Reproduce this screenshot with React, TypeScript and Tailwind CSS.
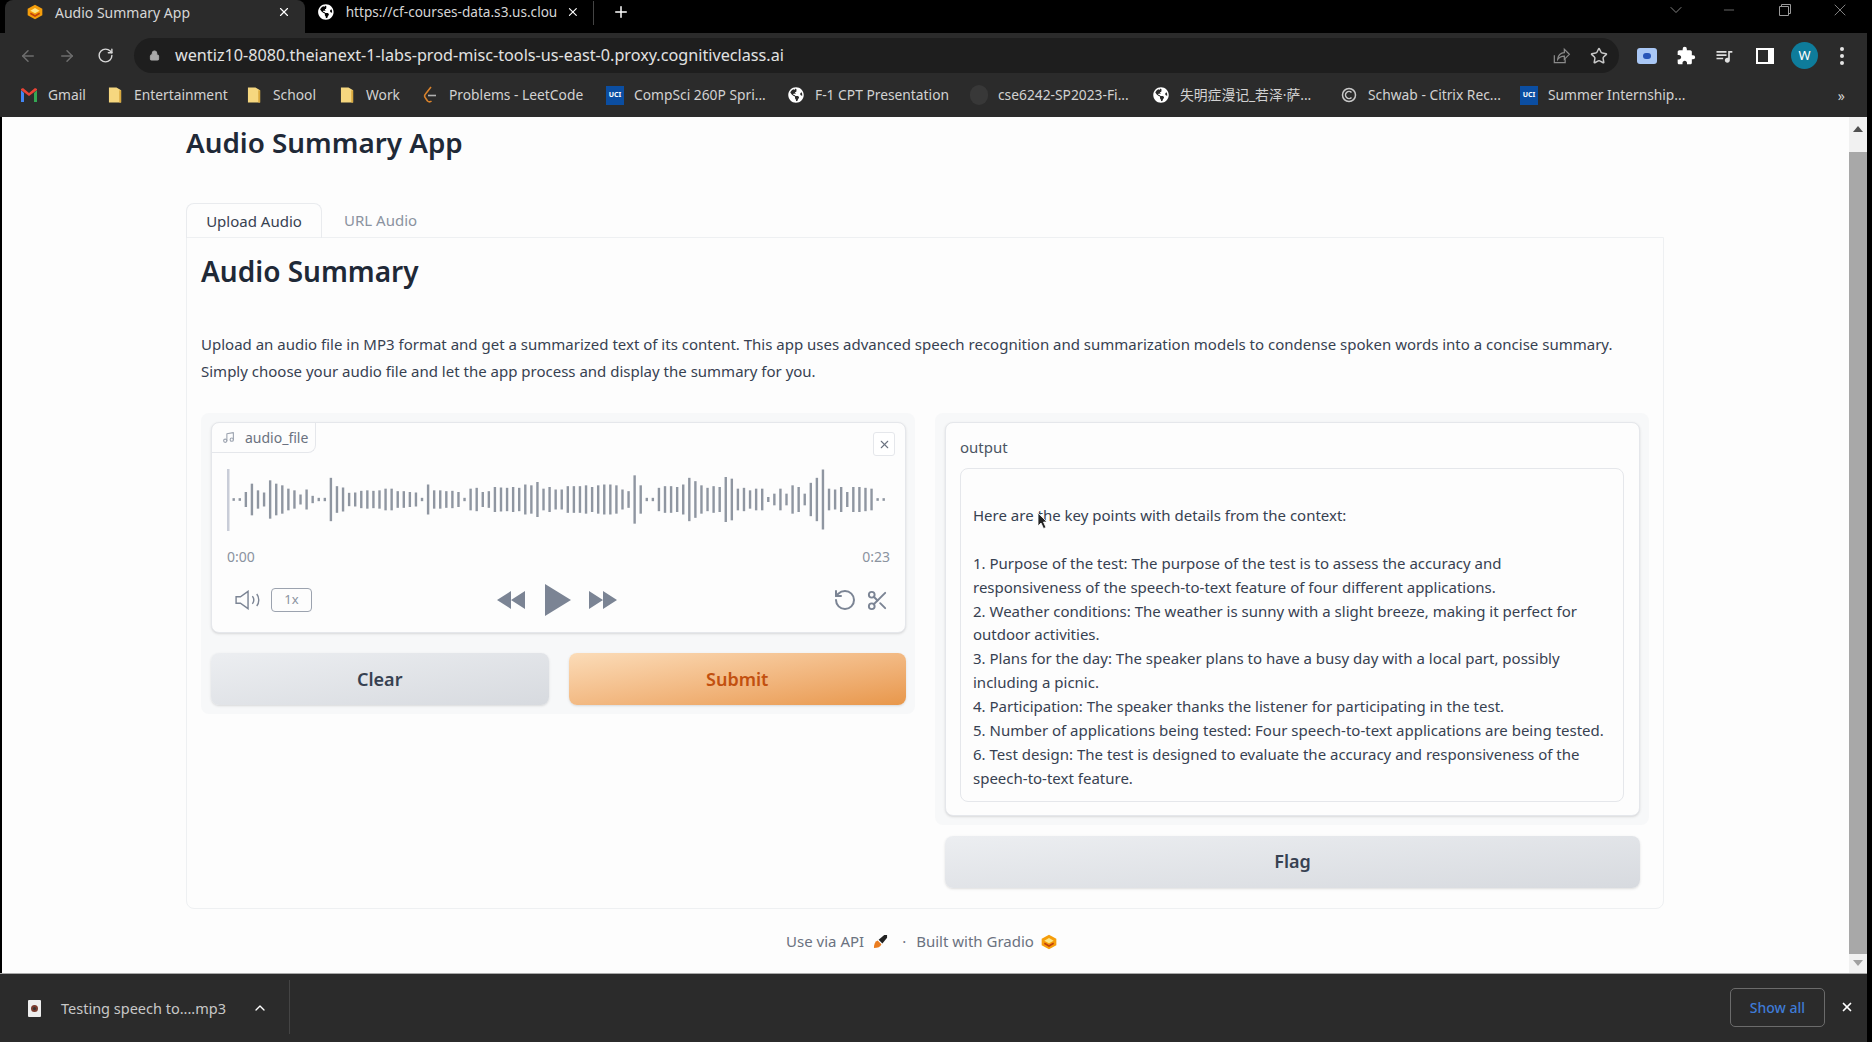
import { ArrowLeft, ArrowRight, ChevronDown, ChevronUp, Lock, Minus, Music, Plus, RotateCcw, RotateCw, Scissors, Star, X } from "lucide-react";
import { FaGlobeAmericas } from "react-icons/fa";
import { MdExtension, MdQueueMusic } from "react-icons/md";

const bars = [
  8, 8, 45, 95, 55, 42, 115, 95, 85, 65, 55, 30, 60, 22, 10, 10, 130, 80, 72, 40, 42, 52, 55, 52, 55, 65, 65, 50, 50, 45, 42, 10,
  90, 55, 55, 50, 52, 45, 10, 65, 70, 45, 50, 75, 72, 70, 75, 70, 90, 85, 105, 65, 75, 60, 60, 80, 80, 80, 85, 75, 85, 90, 90, 85,
  60, 50, 145, 85, 10, 10, 70, 80, 80, 75, 90, 130, 110, 85, 70, 80, 75, 135, 125, 65, 70, 55, 65, 65, 15, 35, 65, 35, 85, 75, 35,
  100, 130, 180, 65, 60, 75, 45, 75, 75, 70, 65, 8, 8,
];

const summary = [
  "Here are the key points with details from the context:",
  "\u00a0",
  "1. Purpose of the test: The purpose of the test is to assess the accuracy and",
  "responsiveness of the speech-to-text feature of four different applications.",
  "2. Weather conditions: The weather is sunny with a slight breeze, making it perfect for",
  "outdoor activities.",
  "3. Plans for the day: The speaker plans to have a busy day with a local part, possibly",
  "including a picnic.",
  "4. Participation: The speaker thanks the listener for participating in the test.",
  "5. Number of applications being tested: Four speech-to-text applications are being tested.",
  "6. Test design: The test is designed to evaluate the accuracy and responsiveness of the",
  "speech-to-text feature.",
];

function GradioLogo({ className }: { className: string }) {
  return (
    <svg viewBox="0 0 24 24" className={className}>
      <path d="M12 1 23 7v10l-11 6-11-6V7z" fill="#f59e0b" />
      <path d="M12 6 19 10l-7 4-7-4z" fill="#fde68a" />
      <path d="M5 14l7 4 7-4" fill="none" stroke="#c2410c" strokeWidth="2.5" />
    </svg>
  );
}

function Folder() {
  return (
    <svg viewBox="0 0 16 18" className="w-[15px] h-[18px]">
      <path d="M1 1h8l5 3v13H1z" fill="#f6d77f" />
      <path d="M14 4v13h-2V4z" fill="#d9a93f" />
    </svg>
  );
}

function Uci() {
  return (
    <span className="w-[19px] h-[19px] flex items-center justify-center bg-[#0b4ea2] text-[7px] font-bold text-white">
      UCI
    </span>
  );
}

function Globe() {
  return <FaGlobeAmericas className="w-[16px] h-[16px] text-white" />;
}

function Gmail() {
  return (
    <svg viewBox="0 0 18 16" className="w-[18px] h-[16px]">
      <path d="M1 3v12h3V6z" fill="#4285f4" />
      <path d="M14 6v9h3V3z" fill="#34a853" />
      <path d="M1 3l8 6 8-6v-1l-2-1-6 5-6-5-2 1z" fill="#ea4335" />
    </svg>
  );
}

function Leet() {
  return (
    <svg viewBox="0 0 14 18" className="w-[14px] h-[18px]" fill="none" strokeWidth="1.6">
      <path d="M8 1 2.5 8a3 3 0 0 0 0 4l2 3a3 3 0 0 0 4 0" stroke="#d9822b" />
      <path d="M5 9.500h8" stroke="#b0b0b0" />
    </svg>
  );
}

function Github() {
  return <span className="w-[20px] h-[20px] rounded-full bg-[#383838]" />;
}

function Schwab() {
  return (
    <svg viewBox="0 0 16 16" className="w-[16px] h-[16px]" fill="none" stroke="#c8c8c8" strokeWidth="1.5">
      <circle cx="8" cy="8" r="6.500" />
      <path d="M10.500 5.500a3.500 3.500 0 1 0 0 5" />
    </svg>
  );
}

const bookmarks = [
  { icon: <Gmail />, label: "Gmail", width: "w-[86px]" },
  { icon: <Folder />, label: "Entertainment", width: "w-[139px]" },
  { icon: <Folder />, label: "School", width: "w-[93px]" },
  { icon: <Folder />, label: "Work", width: "w-[83px]" },
  { icon: <Leet />, label: "Problems - LeetCode", width: "w-[185px]" },
  { icon: <Uci />, label: "CompSci 260P Spri...", width: "w-[181px]" },
  { icon: <Globe />, label: "F-1 CPT Presentation", width: "w-[183px]" },
  { icon: <Github />, label: "cse6242-SP2023-Fi...", width: "w-[182px]" },
  { icon: <Globe />, label: "失明症漫记_若泽·萨...", width: "w-[188px]" },
  { icon: <Schwab />, label: "Schwab - Citrix Rec...", width: "w-[180px]" },
  { icon: <Uci />, label: "Summer Internship...", width: "w-[190px]" },
];

function TabStrip() {
  return (
    <div className="h-[33px] shrink-0 flex items-center pl-[5px] text-[14px] text-[#d6d6d6]">
      <div className="w-[300px] h-full flex items-center pl-[22px] pr-[14px] pb-[9px] bg-[#2b2b2b] rounded-t-lg">
        <GradioLogo className="w-[16px] h-[16px]" />
        <span className="ml-[12px] flex-1">Audio Summary App</span>
        <X className="w-[14px] h-[14px] text-white" />
      </div>
      <div className="w-[288px] h-full flex items-center pl-[13px] pr-[13px] pb-[9px]">
        <Globe />
        <span className="ml-[12px] w-[212px] text-[13.600px] whitespace-nowrap">https://cf-courses-data.s3.us.clou</span>
        <X className="ml-[9px] w-[14px] h-[14px] text-white" />
      </div>
      <div className="w-px h-[24px] mb-[8px] bg-[#444]" />
      <Plus className="ml-[18px] mb-[9px] w-[18px] h-[18px] text-white" />
      <div className="ml-auto flex items-center h-full pb-[13px] text-[#9a9a9a]">
        <ChevronDown className="w-[20px] h-[20px]" strokeWidth={1} />
        <Minus className="ml-[35px] w-[16px] h-[16px]" strokeWidth={1} />
        <svg viewBox="0 0 14 14" className="ml-[41px] w-[14px] h-[14px]" fill="none" stroke="currentColor">
          <path d="M1.500 3.500h9v9h-9z M3.500 3.500v-2h9v9h-2" />
        </svg>
        <X className="ml-[38px] mr-[22px] w-[20px] h-[20px]" strokeWidth={1} />
      </div>
    </div>
  );
}

function Toolbar() {
  return (
    <div className="h-[45px] shrink-0 flex items-center text-[#c4c4c4]">
      <ArrowLeft className="ml-[19px] w-[18px] h-[18px] text-[#6e6e6e]" />
      <ArrowRight className="ml-[21px] w-[18px] h-[18px] text-[#6e6e6e]" />
      <RotateCw className="ml-[21px] w-[17px] h-[17px] text-[#d8d8d8]" />
      <div className="ml-[20px] w-[1485px] h-[35px] flex items-center pl-[15px] rounded-full bg-[#1e1e1e]">
        <Lock className="w-[11px] h-[13px] text-[#aaa] fill-[#aaa]" />
        <span className="ml-[15px] text-[16.200px] text-[#e2e2e2]">
          wentiz10-8080.theianext-1-labs-prod-misc-tools-us-east-0.proxy.cognitiveclass.ai
        </span>
        <svg viewBox="0 0 24 24" className="ml-auto w-[20px] h-[20px]" fill="none" stroke="#8a8a8a" strokeWidth="1.5">
          <path d="M4 11v9h13v-4 M8 16c0-5 4-8 8-8V4l6 6-6 6v-4c-4 0-6 1-8 4z" />
        </svg>
        <Star className="ml-[19px] mr-[11px] w-[18px] h-[18px] text-[#c8c8c8]" />
      </div>
      <div className="ml-[18px] w-[20px] h-[16px] flex items-center justify-center rounded-[3px] bg-[#a9c7f5]">
        <span className="w-[8px] h-[6px] rounded-full bg-[#2855b8]" />
      </div>
      <MdExtension className="ml-[19px] w-[20px] h-[20px] text-white" />
      <MdQueueMusic className="ml-[18px] w-[20px] h-[20px] text-[#e0e0e0]" />
      <div className="ml-[22px] w-[18px] h-[16px] flex border-2 border-white">
        <span className="w-[10px] bg-[#2b2b2b]" />
        <span className="flex-1 bg-white" />
      </div>
      <div className="ml-[17px] w-[27px] h-[27px] flex items-center justify-center rounded-full bg-[#0e7c9b] text-[13px] text-white">
        W
      </div>
      <div className="ml-[22px] flex flex-col gap-[3px]">
        <span className="w-[4px] h-[4px] rounded-full bg-[#e4e4e4]" />
        <span className="w-[4px] h-[4px] rounded-full bg-[#e4e4e4]" />
        <span className="w-[4px] h-[4px] rounded-full bg-[#e4e4e4]" />
      </div>
    </div>
  );
}

function BookmarkBar() {
  return (
    <div className="h-[39px] shrink-0 pb-[5px] pl-[20px] flex items-center text-[13.800px] text-[#d2d2d2] font-['Noto_Sans','Noto_Sans_CJK_SC',sans-serif]">
      {bookmarks.map((b) => (
        <div key={b.label} className={`${b.width} flex items-center gap-[10px] whitespace-nowrap`}>
          <span className="w-[18px] flex justify-center">{b.icon}</span>
          {b.label}
        </div>
      ))}
      <span className="ml-auto mr-[22px] text-[14px]">»</span>
    </div>
  );
}

function AudioCard() {
  return (
    <div className="relative h-[211px] rounded-lg border border-[#e5e7eb] bg-[#fdfdfd] px-[15px] shadow-sm">
      <div className="w-[104px] h-[30px] flex items-center gap-[10px] pl-[10px] -ml-[15px] rounded-br-lg border-b border-r border-[#e5e7eb] text-[14px] text-[#6b7280]">
        <Music className="w-[13px] h-[13px] text-[#9ca3af]" />
        audio_file
      </div>
      <button className="absolute top-[9px] right-[10px] w-[22px] h-[24px] flex items-center justify-center rounded-[3px] border border-[#e5e7eb] bg-white">
        <X className="w-[13px] h-[13px] text-[#6b7280]" />
      </button>
      <svg viewBox="0 0 664 62" className="mt-[16px] w-[664px] h-[62px]">
        <rect x="0" y="0" width="2.500" height="62" fill="#c9cdd8" />
        {bars.map((h, i) => (
          <rect key={i} x={5.500 + (i * 650) / (bars.length - 1)} y={30.500 - h / 6} width="2.400" height={h / 3} fill="#8f96a1" />
        ))}
      </svg>
      <div className="mt-[15px] h-[20px] flex items-center justify-between text-[14px] text-[#8b93a0]">
        <span>0:00</span>
        <span>0:23</span>
      </div>
      <div className="mt-[18px] h-[32px] grid grid-cols-3 items-center">
        <div className="flex items-center pl-[8px]">
          <svg viewBox="0 0 23 18" className="w-[25px] h-[20px]" fill="none" stroke="#7b8494" strokeWidth="1.300">
            <path d="M1 6v6h4l7 5V1L5 6z" />
            <path d="M16 5.500c1.500 2 1.500 5 0 7 M20 3.500c2.500 3 2.500 8 0 11" />
          </svg>
          <span className="ml-[11px] w-[41px] h-[24px] flex items-center justify-center rounded border border-[#9ca3af] text-[13px] text-[#8b93a0]">
            1x
          </span>
        </div>
        <div className="flex items-center justify-center pr-[3px]">
          <svg viewBox="0 0 28 20" className="w-[28px] h-[20px]" fill="#7b8494">
            <path d="M0 10 14 1v18z M14 10 28 1v18z" />
          </svg>
          <svg viewBox="0 0 26 32" className="ml-[20px] w-[26px] h-[32px]" fill="#7b8494">
            <path d="M0 0 26 16 0 32z" />
          </svg>
          <svg viewBox="0 0 28 20" className="ml-[18px] w-[28px] h-[20px]" fill="#7b8494">
            <path d="M0 1 14 10 0 19z M14 1 28 10 14 19z" />
          </svg>
        </div>
        <div className="flex items-center justify-end gap-[9px] pr-[1px] text-[#7b8494]">
          <RotateCcw className="w-[24px] h-[24px]" strokeWidth={2} />
          <Scissors className="w-[23px] h-[23px]" strokeWidth={2} />
        </div>
      </div>
    </div>
  );
}

function GrayButton({ label, className }: { label: string; className: string }) {
  return (
    <button className={`rounded-lg bg-gradient-to-br from-[#eceef1] to-[#d7dadf] text-[18px] font-semibold text-[#374151] shadow-sm ${className}`}>
      {label}
    </button>
  );
}

function MainPage() {
  return (
    <div className="flex-1 min-w-0 pl-[184px] font-['Noto_Sans',sans-serif]">
      <div className="w-[1478px]">
        <h1 className="pt-[7px] text-[27.800px] leading-[36px] font-semibold text-[#1f2937]">Audio Summary App</h1>
        <div className="mt-[43px] h-[35px] flex items-stretch text-[15px]">
          <div className="w-[136px] flex items-center justify-center rounded-t-lg border border-b-0 border-[#e9ebee] text-[#374151]">
            Upload Audio
          </div>
          <div className="w-[150px] flex items-center pl-[22px] text-[#8b93a0]">URL Audio</div>
        </div>
        <div className="-mt-px border border-[#eef0f2] rounded-b-lg px-[14px] pt-[15px] pb-[20px]">
          <h2 className="text-[28px] leading-[36px] font-semibold text-[#1f2937]">Audio Summary</h2>
          <p className="mt-[42px] text-[15px] leading-[27px] text-[#374151]">
            Upload an audio file in MP3 format and get a summarized text of its content. This app uses advanced speech recognition and summarization models to condense spoken words into a concise summary.
            <br />
            Simply choose your audio file and let the app process and display the summary for you.
          </p>
          <div className="mt-[28px] grid grid-cols-2 gap-[20px] items-start">
            <div className="rounded-lg bg-[#f7f8f9] pl-[10px] pr-[9px] py-[9px]">
              <AudioCard />
              <div className="mt-[20px] h-[52px] grid grid-cols-2 gap-[20px]">
                <GrayButton label="Clear" className="" />
                <button className="rounded-lg bg-gradient-to-br from-[#fbdcb8] to-[#e8974a] text-[18px] font-semibold text-[#c2500f] shadow-sm">
                  Submit
                </button>
              </div>
            </div>
            <div>
              <div className="rounded-lg bg-[#f7f8f9] pl-[10px] pr-[9px] py-[9px]">
                <div className="rounded-lg border border-[#e5e7eb] bg-[#fdfdfd] pl-[14px] pr-[15px] pt-[12px] pb-[13px] shadow-sm">
                  <div className="h-[24px] text-[15px] leading-[24px] text-[#4b5563]">output</div>
                  <div className="relative mt-[9px] rounded-lg border border-[#e5e7eb] pl-[12px] pt-[35px] pb-[10px] text-[15px] leading-[23.900px] text-[#374151]">
                    {summary.map((line, i) => (
                      <div key={i} className="h-[23.900px] whitespace-nowrap">
                        {line}
                      </div>
                    ))}
                    <svg viewBox="0 0 12 18" className="absolute left-[76px] top-[43px] w-[12px] h-[18px]">
                      <path d="M1 1v13l3-3 2.500 5.500 2.500-1-2.500-5.500H10z" fill="#222" stroke="#fff" strokeWidth="0.800" />
                    </svg>
                  </div>
                </div>
              </div>
              <div className="mt-[11px] pl-[10px] pr-[9px]">
                <GrayButton label="Flag" className="w-full h-[52px]" />
              </div>
            </div>
          </div>
        </div>
        <div className="mt-[21px] h-[24px] pr-[7px] flex items-center justify-center text-[15px] text-[#6b7280]">
          Use via API
          <svg viewBox="0 0 16 16" className="ml-[9px] w-[15px] h-[15px]">
            <path d="M1 15c0-4 1-7 4-8l4 4c-1 3-4 4-8 4z" fill="#ea7c1f" />
            <path d="M6 6l6-5 3 0 0 3-5 6z" fill="#222" />
          </svg>
          <span className="ml-[14px] mr-[10px]">·</span>
          Built with Gradio
          <GradioLogo className="ml-[7px] w-[16px] h-[16px]" />
        </div>
      </div>
    </div>
  );
}

function Scrollbar() {
  return (
    <div className="w-[18px] shrink-0 flex flex-col items-center bg-[#f1f1f1]">
      <div className="h-[35px] pt-[9px]">
        <div className="w-0 h-0 border-x-[5px] border-b-[6px] border-x-transparent border-b-[#505050]" />
      </div>
      <div className="w-full h-[802px] bg-[#a8a8a8]" />
      <div className="pt-[6px]">
        <div className="w-0 h-0 border-x-[5px] border-t-[6px] border-x-transparent border-t-[#a0a0a0]" />
      </div>
    </div>
  );
}

function DownloadBar() {
  return (
    <div className="h-[69px] shrink-0 flex items-center border-t border-[#a8a8a8] bg-[#2b2b2b] pb-[2px] text-[14.500px] text-[#c8c8c8]">
      <div className="ml-[28px] mt-[2px] w-[13px] h-[17px] flex items-center justify-center rounded-[1px] bg-[#eeeeee]">
        <span className="w-[7px] h-[7px] rounded-full border-2 border-[#7a3b2e] bg-[#333]" />
      </div>
      <span className="ml-[20px] w-[191px] pt-[3px]">Testing speech to....mp3</span>
      <ChevronUp className="mt-[2px] w-[16px] h-[16px] text-white" />
      <div className="ml-[21px] w-px h-[54px] bg-[#444]" />
      <button className="ml-auto w-[95px] h-[39px] rounded-[5px] border border-[#6b6b6b] text-[14px] font-medium text-[#3f7bd6]">
        Show all
      </button>
      <X className="ml-[15px] mr-[13px] w-[14px] h-[14px] text-white" strokeWidth={3} />
    </div>
  );
}

export default function App() {
  return (
    <div className="w-[1872px] h-[1042px] flex flex-col overflow-hidden bg-black font-['Noto_Sans',sans-serif]">
      <TabStrip />
      <div className="flex-1 min-h-0 flex flex-col mr-[5px] bg-[#2b2b2b]">
        <Toolbar />
        <BookmarkBar />
        <div className="flex-1 min-h-0 flex overflow-hidden border-l-2 border-black bg-[#fdfdfd]">
          <MainPage />
          <Scrollbar />
        </div>
        <DownloadBar />
      </div>
    </div>
  );
}
